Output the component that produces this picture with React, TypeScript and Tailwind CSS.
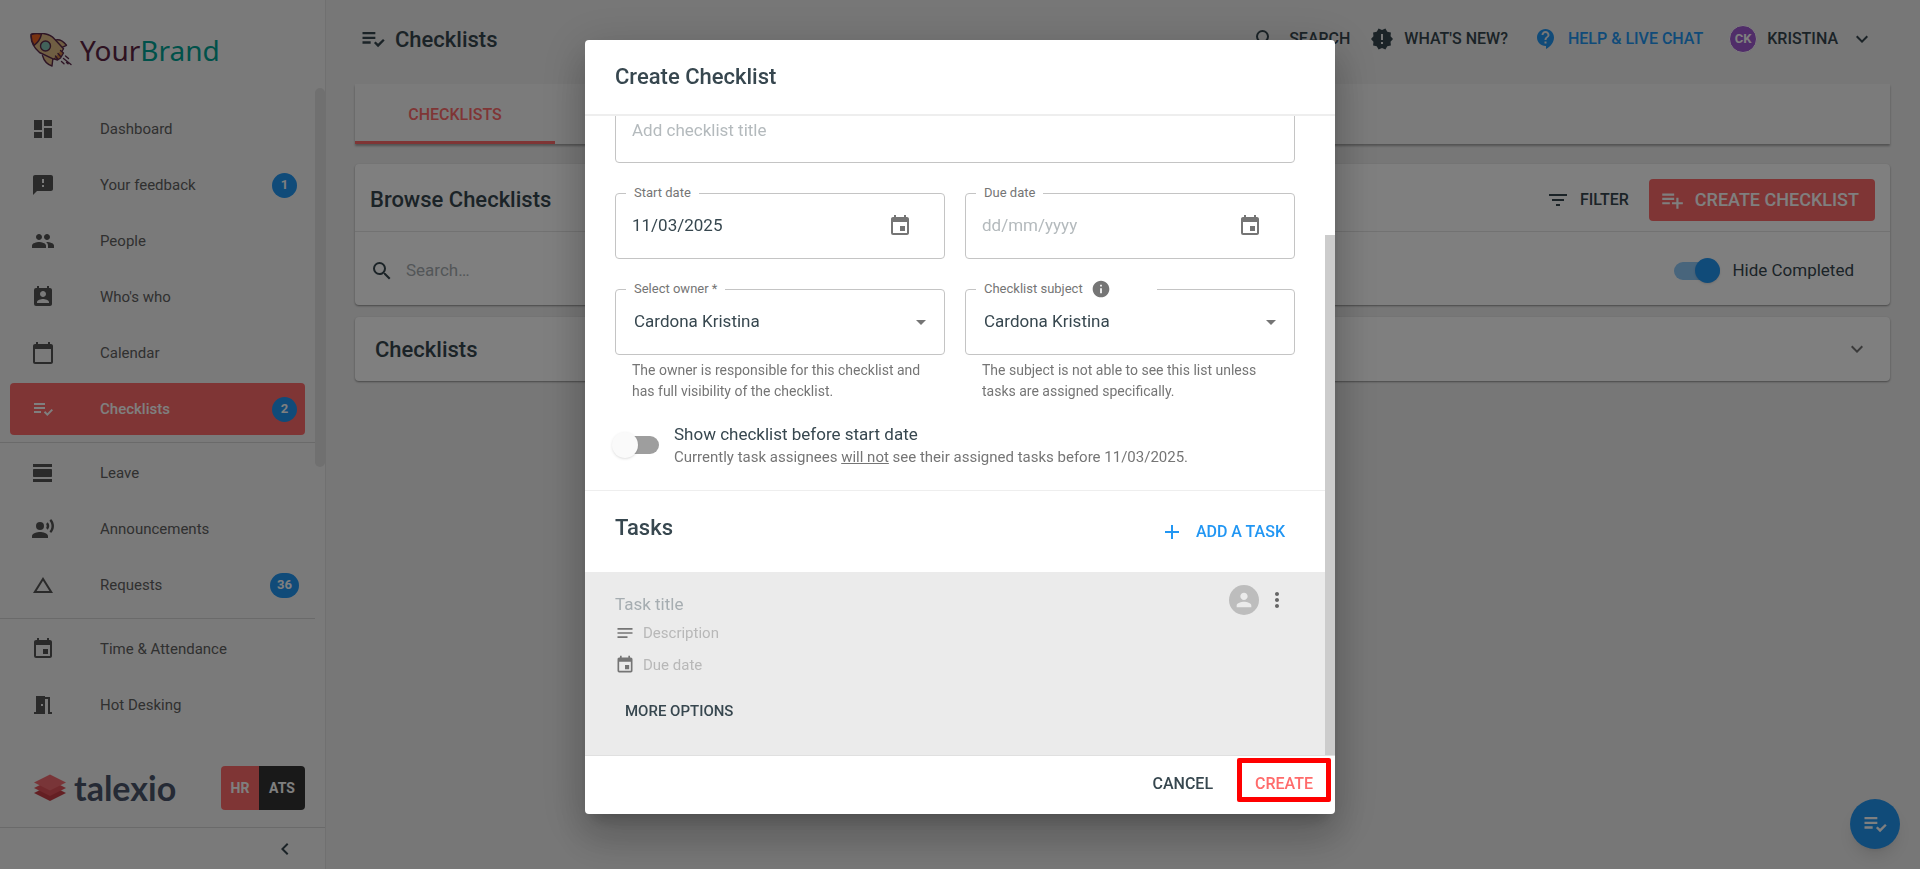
import type { ReactNode } from "react";
import type { IconType } from "react-icons";
import {
  MdAdd,
  MdArrowDropDown,
  MdCalendarToday,
  MdChangeHistory,
  MdChevronLeft,
  MdContactSupport,
  MdDashboard,
  MdEvent,
  MdExpandMore,
  MdFeedback,
  MdFilterList,
  MdInfo,
  MdMeetingRoom,
  MdMoreVert,
  MdNewReleases,
  MdNotes,
  MdPeople,
  MdPermContactCalendar,
  MdPerson,
  MdPlaylistAdd,
  MdPlaylistAddCheck,
  MdRecordVoiceOver,
  MdSearch,
  MdViewDay,
} from "react-icons/md";

type NavItem = {
  label: string;
  icon: IconType;
  badge?: number;
  active?: boolean;
};

const navGroups: NavItem[][] = [
  [
    { label: "Dashboard", icon: MdDashboard },
    { label: "Your feedback", icon: MdFeedback, badge: 1 },
    { label: "People", icon: MdPeople },
    { label: "Who's who", icon: MdPermContactCalendar },
    { label: "Calendar", icon: MdCalendarToday },
    { label: "Checklists", icon: MdPlaylistAddCheck, badge: 2, active: true },
  ],
  [
    { label: "Leave", icon: MdViewDay },
    { label: "Announcements", icon: MdRecordVoiceOver },
    { label: "Requests", icon: MdChangeHistory, badge: 36 },
  ],
  [
    { label: "Time & Attendance", icon: MdEvent },
    { label: "Hot Desking", icon: MdMeetingRoom },
  ],
];

function RocketLogo() {
  return (
    <svg width="42" height="34" viewBox="0 0 42 34" fill="none" stroke="#5c2a4a" strokeWidth="1.4" strokeLinejoin="round" strokeLinecap="round">
      <path d="M22 8.5C27 5.500 32 6.500 36.500 12.300L31 14.800" fill="#e0bd86" />
      <path d="M12.500 22.500C14 28 17.500 31.500 22 33L23 24.500" fill="#e0bd86" />
      <path d="M1.200 1.500C8-.8 19-.5 24.500 6L33.500 15.800C31 21 28 24.500 23.500 26.200L9.500 19.500C3.500 14.500 .5 8 1.200 1.500Z" fill="#e0bd86" />
      <path d="M1.200 1.500C4 .5 8 .2 11.500 1C10.500 5.500 8.500 9 4.300 12.300C1.800 8.800 .9 5 1.200 1.500Z" fill="#f06423" />
      <circle cx="15.500" cy="13" r="5" fill="#84c4b4" />
      <path d="M30.500 17.500L33.500 20L32 22.500L30.500 25L27.500 27L24.500 26M28 20.500L31 24M25.500 23L28 26.500" fill="#d68a4a" />
      <path d="M35.500 23L38.500 25.500M33.500 25.500L41 31.500M31.500 28.500L34 30.800M36.500 29.500L38 30.800" />
    </svg>
  );
}

function LayersLogo() {
  return (
    <svg width="32" height="28" viewBox="0 0 32 28">
      <path d="M0 19L16 11L32 19L16 27Z" fill="#c83e46" />
      <path d="M0 14L16 6L32 14L16 22Z" fill="#e2525a" />
      <path d="M0 8.500L16 .5L32 8.500L16 16.500Z" fill="#f26b70" />
    </svg>
  );
}

function NavLink({ label, icon: Icon, badge, active }: NavItem) {
  return (
    <a
      href="#"
      className={
        active
          ? "flex h-[52px] items-center rounded bg-[#ff6b6b] pr-2 pl-[21px] text-[15px] font-medium text-white"
          : "flex h-[52px] items-center rounded pr-2 pl-[21px] text-[15px] text-[#616161]"
      }
    >
      <Icon className={active ? "size-6" : "size-6 text-[#555]"} />
      <span className="ml-[45px] flex-1">{label}</span>
      {badge !== undefined && (
        <span className="flex w-[25px] justify-center">
          <span className="flex h-[25px] min-w-[25px] shrink-0 items-center justify-center rounded-full bg-[#2196f3] px-[7px] text-[13px] font-bold text-white">
            {badge}
          </span>
        </span>
      )}
    </a>
  );
}

function Sidebar() {
  return (
    <aside className="relative flex w-[326px] shrink-0 flex-col border-r border-[#e0e0e0] bg-[#f5f5f5]">
      <div className="flex h-[99px] items-center gap-2 pl-[30px]">
        <RocketLogo />
        <span className="font-['Noto_Sans',sans-serif] text-[28px] text-[#5c2443]">
          Your<span className="text-[#00a394]">Brand</span>
        </span>
      </div>

      <nav className="flex-1 pr-2.5">
        {navGroups.map((group, i) => (
          <div key={i} className="flex flex-col gap-1 border-b border-[#d4d4d4] pt-1 pr-2.5 pb-[7px] pl-2.5 last:border-b-0">
            {group.map((item) => (
              <NavLink key={item.label} {...item} />
            ))}
          </div>
        ))}
      </nav>
      <div className="absolute top-[88px] right-0 h-[379px] w-2.5 rounded-full bg-[#e0e0e0]" />

      <div className="flex h-20 items-center justify-between pt-0.5 pr-5 pl-[34px]">
        <div className="flex items-center gap-2">
          <LayersLogo />
          <span className="font-[Lato,sans-serif] text-[34px] leading-8 font-bold text-[#4b556b]">talexio</span>
        </div>
        <div className="flex h-11 overflow-hidden rounded text-sm font-bold text-white">
          <button className="w-[38px] bg-[#ff6b6b]">HR</button>
          <button className="w-[46px] bg-[#333]">ATS</button>
        </div>
      </div>
      <div className="flex h-[42px] items-center justify-end border-t border-[#d4d4d4] pr-7 text-[#37474f]">
        <button aria-label="Collapse menu">
          <MdChevronLeft className="size-6" />
        </button>
      </div>
    </aside>
  );
}

function Header() {
  return (
    <header className="flex h-[84px] items-center justify-between pr-4 pb-1.5 text-[#37474f]">
      <h1 className="flex items-center gap-2 pl-1 text-[22px] font-medium">
        <MdPlaylistAddCheck className="size-7" />
        Checklists
      </h1>
      <div className="flex items-center text-base font-medium">
        <button className="flex items-center gap-3">
          <MdSearch className="size-6" />
          SEARCH
        </button>
        <button className="ml-5 flex items-center gap-2.5">
          <MdNewReleases className="size-6" />
          WHAT'S NEW?
        </button>
        <button className="ml-[26px] flex items-center gap-2.5 text-[#2196f3]">
          <MdContactSupport className="size-6" />
          HELP &amp; LIVE CHAT
        </button>
        <button className="ml-[26px] flex items-center">
          <span className="mr-2.5 flex size-7 items-center justify-center rounded-full border border-white bg-[#a05ad2] text-[13px] font-bold text-white">
            CK
          </span>
          KRISTINA
          <MdExpandMore className="ml-3 size-6" />
        </button>
      </div>
    </header>
  );
}

function Content() {
  return (
    <main className="flex-1 bg-[#eee] pr-[30px] pl-[29px] text-[#37474f]">
      <Header />

      <div className="flex h-[60px] bg-[#f6f6f6] shadow-[0_2px_2px_rgba(0,0,0,0.3)]">
        <button className="w-[200px] border-b-3 border-[#ff6b6b] pt-1 text-base font-medium text-[#ff6b6b]">CHECKLISTS</button>
      </div>

      <section className="mt-5 rounded bg-white shadow-[0_1px_2px_rgba(0,0,0,0.4)]">
        <div className="flex h-[68px] items-center border-b border-[#e4e4e4] pt-1 pr-[15px] pl-[15px]">
          <h2 className="flex-1 text-[22px] font-medium">Browse Checklists</h2>
          <button className="flex items-center gap-2.5 text-base font-medium">
            <MdFilterList className="size-6" />
            FILTER
          </button>
          <button className="ml-5 flex h-[42px] items-center gap-2.5 rounded bg-[#ff6b6b] pr-4 pl-2.5 text-lg font-medium text-white">
            <MdPlaylistAdd className="size-[26px]" />
            CREATE CHECKLIST
          </button>
        </div>
        <div className="flex h-[73px] items-center pt-1 pr-9 pl-[15px]">
          <MdSearch className="size-6" />
          <input
            aria-label="Search"
            placeholder="Search…"
            className="ml-3 flex-1 text-[17px] outline-none placeholder:text-[#a6adb1]"
          />
          <label className="flex items-center text-[17px]">
            <input type="checkbox" role="switch" defaultChecked className="peer sr-only" />
            <span className="mr-3 flex h-[18px] w-[46px] items-center justify-end rounded-full bg-[#90caf9]">
              <span className="size-[25px] shrink-0 rounded-full bg-[#2196f3] shadow" />
            </span>
            Hide Completed
          </label>
        </div>
      </section>

      <section className="mt-3 flex h-16 items-center justify-between rounded bg-white pr-[21px] pl-5 shadow-[0_1px_2px_rgba(0,0,0,0.4)]">
        <h2 className="text-[22px] font-medium">Checklists</h2>
        <button aria-label="Expand checklists" className="text-[#757575]">
          <MdExpandMore className="size-6" />
        </button>
      </section>
    </main>
  );
}

type FieldProps = {
  id: string;
  label: ReactNode;
  labelClass?: string;
  children: ReactNode;
};

function Field({ id, label, labelClass = "", children }: FieldProps) {
  return (
    <div className="relative flex h-[66px] items-center rounded border border-[#c4c4c4]">
      <label htmlFor={id} className={"absolute -top-[11px] left-2.5 flex h-5 items-center bg-white px-2 text-[13px] text-[#757575] " + labelClass}>
        {label}
      </label>
      {children}
    </div>
  );
}

function DateField({ id, label, value }: { id: string; label: string; value?: string }) {
  return (
    <Field id={id} label={label}>
      <input
        id={id}
        defaultValue={value}
        placeholder="dd/mm/yyyy"
        className="min-w-0 flex-1 pl-4 text-[17px] outline-none placeholder:text-[#b4babd]"
      />
      <button aria-label="Choose date" className="mr-8 text-[#757575]">
        <MdEvent className="size-6" />
      </button>
    </Field>
  );
}

function PersonField({ id, label, labelClass, help }: { id: string; label: ReactNode; labelClass?: string; help: string }) {
  return (
    <div>
      <Field id={id} label={label} labelClass={labelClass}>
        <select id={id} className="h-full w-full appearance-none pl-[18px] text-[17px] outline-none">
          <option>Cardona Kristina</option>
        </select>
        <MdArrowDropDown className="pointer-events-none absolute right-[11px] size-6 text-[#757575]" />
      </Field>
      <p className="mt-[5px] px-[17px] text-sm leading-[21px] text-[#757575]">{help}</p>
    </div>
  );
}

function CreateChecklistDialog() {
  return (
    <div className="fixed inset-0 flex justify-center bg-black/50 pt-10 pb-[55px]">
      <div
        role="dialog"
        aria-label="Create Checklist"
        className="flex w-full max-w-[750px] flex-col rounded bg-white text-[#37474f] shadow-[0_11px_15px_-7px_rgba(0,0,0,0.2),0_24px_38px_3px_rgba(0,0,0,0.14),0_9px_46px_8px_rgba(0,0,0,0.12)]"
      >
        <h2 className="border-b-2 border-[#eee] px-[30px] py-[22px] text-[22px] leading-[30px] font-medium">Create Checklist</h2>

        <div className="relative flex min-h-0 flex-1 flex-col justify-end overflow-hidden pr-2.5">
          <div className="grid shrink-0 grid-cols-2 gap-x-5 px-[30px]">
            <input
              aria-label="Checklist title"
              placeholder="Add checklist title"
              className="col-span-2 mb-[30px] h-[66px] w-full rounded border border-[#c4c4c4] px-4 text-[17px] outline-none placeholder:text-[#b4babd]"
            />
            <DateField id="start-date" label="Start date" value="11/03/2025" />
            <DateField id="due-date" label="Due date" />
            <div className="col-span-2 h-[30px]" />
            <PersonField
              id="owner"
              label="Select owner *"
              help="The owner is responsible for this checklist and has full visibility of the checklist."
            />
            <PersonField
              id="subject"
              labelClass="w-[181px] gap-2"
              label={
                <>
                  Checklist subject
                  <MdInfo className="size-5" />
                </>
              }
              help="The subject is not able to see this list unless tasks are assigned specifically."
            />
          </div>

          <label className="mt-5 flex shrink-0 items-center pb-[22px] pl-[27px]">
            <input type="checkbox" role="switch" className="peer sr-only" />
            <span className="mr-[15px] flex h-[18px] w-[47px] items-center">
              <span className="z-10 size-[26px] shrink-0 rounded-full bg-[#fafafa] shadow" />
              <span className="-ml-3 h-[18px] flex-1 rounded-r-full bg-[#9e9e9e]" />
            </span>
            <span>
              <span className="block text-[17px] leading-6">Show checklist before start date</span>
              <span className="block text-[15px] leading-[22px] text-[#757575]">
                Currently task assignees <u>will not</u> see their assigned tasks before 11/03/2025.
              </span>
            </span>
          </label>

          <div className="flex h-[82px] shrink-0 items-center justify-between border-t border-[#eee] pr-10 pl-[30px]">
            <h3 className="pb-2 text-[22px] font-medium">Tasks</h3>
            <button className="flex items-center gap-3 text-base font-medium text-[#2196f3]">
              <MdAdd className="size-6" />
              ADD A TASK
            </button>
          </div>

          <div className="flex h-[183px] shrink-0 justify-between bg-[#ebebeb] pt-[13px] pr-9 pl-[30px]">
            <div className="flex-1 pt-2">
              <input
                aria-label="Task title"
                placeholder="Task title"
                className="block h-6 w-full text-[17px] outline-none placeholder:text-[#a6adb1]"
              />
              <div className="flex h-8 items-center gap-2 text-[15px] text-[#757575]">
                <MdNotes className="size-5" />
                <input aria-label="Description" placeholder="Description" className="outline-none placeholder:text-[#b8b8b8]" />
              </div>
              <div className="flex h-8 items-center gap-2 text-[15px] text-[#757575]">
                <MdEvent className="size-5" />
                <input aria-label="Task due date" placeholder="Due date" className="outline-none placeholder:text-[#b8b8b8]" />
              </div>
              <button className="mt-3.5 ml-2.5 h-8 text-[15px] font-medium">MORE OPTIONS</button>
            </div>
            <div className="flex h-[30px] items-center gap-1.5">
              <button aria-label="Assign task" className="flex size-[30px] items-center justify-center rounded-full bg-[#bdbdbd] text-[#ebebeb]">
                <MdPerson className="size-[22px]" />
              </button>
              <button aria-label="Task menu" className="text-[#666]">
                <MdMoreVert className="size-6" />
              </button>
            </div>
          </div>
          <div className="absolute right-0 bottom-0 h-[520px] w-2.5 bg-[#ccc]" />
        </div>

        <div className="flex h-[59px] items-center justify-end border-t border-[#e0e0e0] pr-[22px] pb-0.5 text-base font-medium">
          <button>CANCEL</button>
          <button className="relative ml-[42px] text-[#ff6b6b]">
            CREATE
            <span className="absolute -inset-x-[18px] -top-3.5 -bottom-1.5 rounded-xs border-5 border-[#ff0000]" />
          </button>
        </div>
      </div>
    </div>
  );
}

export default function App() {
  return (
    <div className="flex min-h-screen font-[Roboto,sans-serif]">
      <Sidebar />
      <Content />
      <button
        aria-label="My checklists"
        className="fixed right-5 bottom-5 flex size-[50px] items-center justify-center rounded-full bg-[#2196f3] text-white shadow-lg"
      >
        <MdPlaylistAddCheck className="size-7" />
      </button>
      <CreateChecklistDialog />
    </div>
  );
}
